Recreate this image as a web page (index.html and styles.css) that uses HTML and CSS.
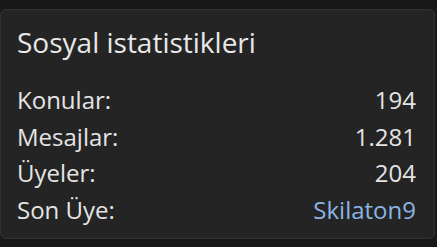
FILE: index.html
```html
<!DOCTYPE html>
<html lang="tr">
<head>
<meta charset="utf-8">
<link rel="stylesheet" href="styles.css">
</head>
<body>
<section class="card">
  <h3 class="title">Sosyal istatistikleri</h3>
  <dl class="stats">
    <div class="row"><dt>Konular:</dt><dd>194</dd></div>
    <div class="row"><dt>Mesajlar:</dt><dd>1.281</dd></div>
    <div class="row"><dt>Üyeler:</dt><dd>204</dd></div>
    <div class="row"><dt>Son Üye:</dt><dd><a class="user" href="#">Skilaton9</a></dd></div>
  </dl>
</section>
</body>
</html>
```
FILE: styles.css
```css
html, body {
  margin: 0;
  padding: 0;
  background: #181818;
}
body {
  font-family: "Open Sans", "Noto Sans", sans-serif;
  color: #e4e4e4;
  padding-top: 9px;
}
.card {
  box-sizing: border-box;
  width: 435px;
  height: 230px;
  background: #242424;
  border: 1px solid #323232;
  border-radius: 6px;
  padding: 15px 18px 0 16px;
}
.title {
  margin: 0;
  font-size: 28px;
  font-weight: 400;
  line-height: 35px;
  color: #e8e8e8;
}
.stats {
  margin: 22px 0 0;
}
.row {
  display: flex;
  justify-content: space-between;
  font-size: 24px;
  line-height: 36.5px;
}
.row dt, .row dd {
  margin: 0;
}
.user {
  color: #8ab5e2;
  text-decoration: none;
}
```
